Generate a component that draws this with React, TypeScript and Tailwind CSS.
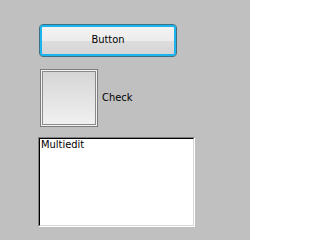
export default function App() {
  return (
    <main className="w-[250px] h-[240px] bg-[#c0c0c0] pt-6 pl-[39px] font-['DejaVu_Sans_Condensed','DejaVu_Sans',sans-serif] text-[11px] text-black">
      <button className="w-[138px] h-[33px] rounded-[4px] border border-[#3a6f86] p-0">
        <div className="w-full h-full rounded-[3px] border-2 border-[#1cb4ec] bg-[linear-gradient(to_bottom,#f3f3f3_0%,#ececec_50%,#dcdcdc_52%,#d6d6d6_100%)] flex items-center justify-center">
          Button
        </div>
      </button>

      <div className="flex items-center mt-3 ml-px">
        <div className="w-[58px] h-[58px] border border-[#7c7c7c] p-px bg-[#f4f4f4]">
          <div className="w-full h-full border border-[#8a8a8a] bg-[linear-gradient(to_bottom,#d6d6d6,#f0f0f0)]" />
        </div>
        <span className="ml-1 mt-px">Check</span>
      </div>

      <div className="w-[157px] h-[90px] mt-[10px] -ml-px border border-[#808080] border-r-white border-b-white">
        <div className="w-full h-full border border-black border-r-[#d8d8d8] border-b-[#d8d8d8] bg-white pl-px leading-[12px]">
          Multiedit
        </div>
      </div>
    </main>
  )
}
